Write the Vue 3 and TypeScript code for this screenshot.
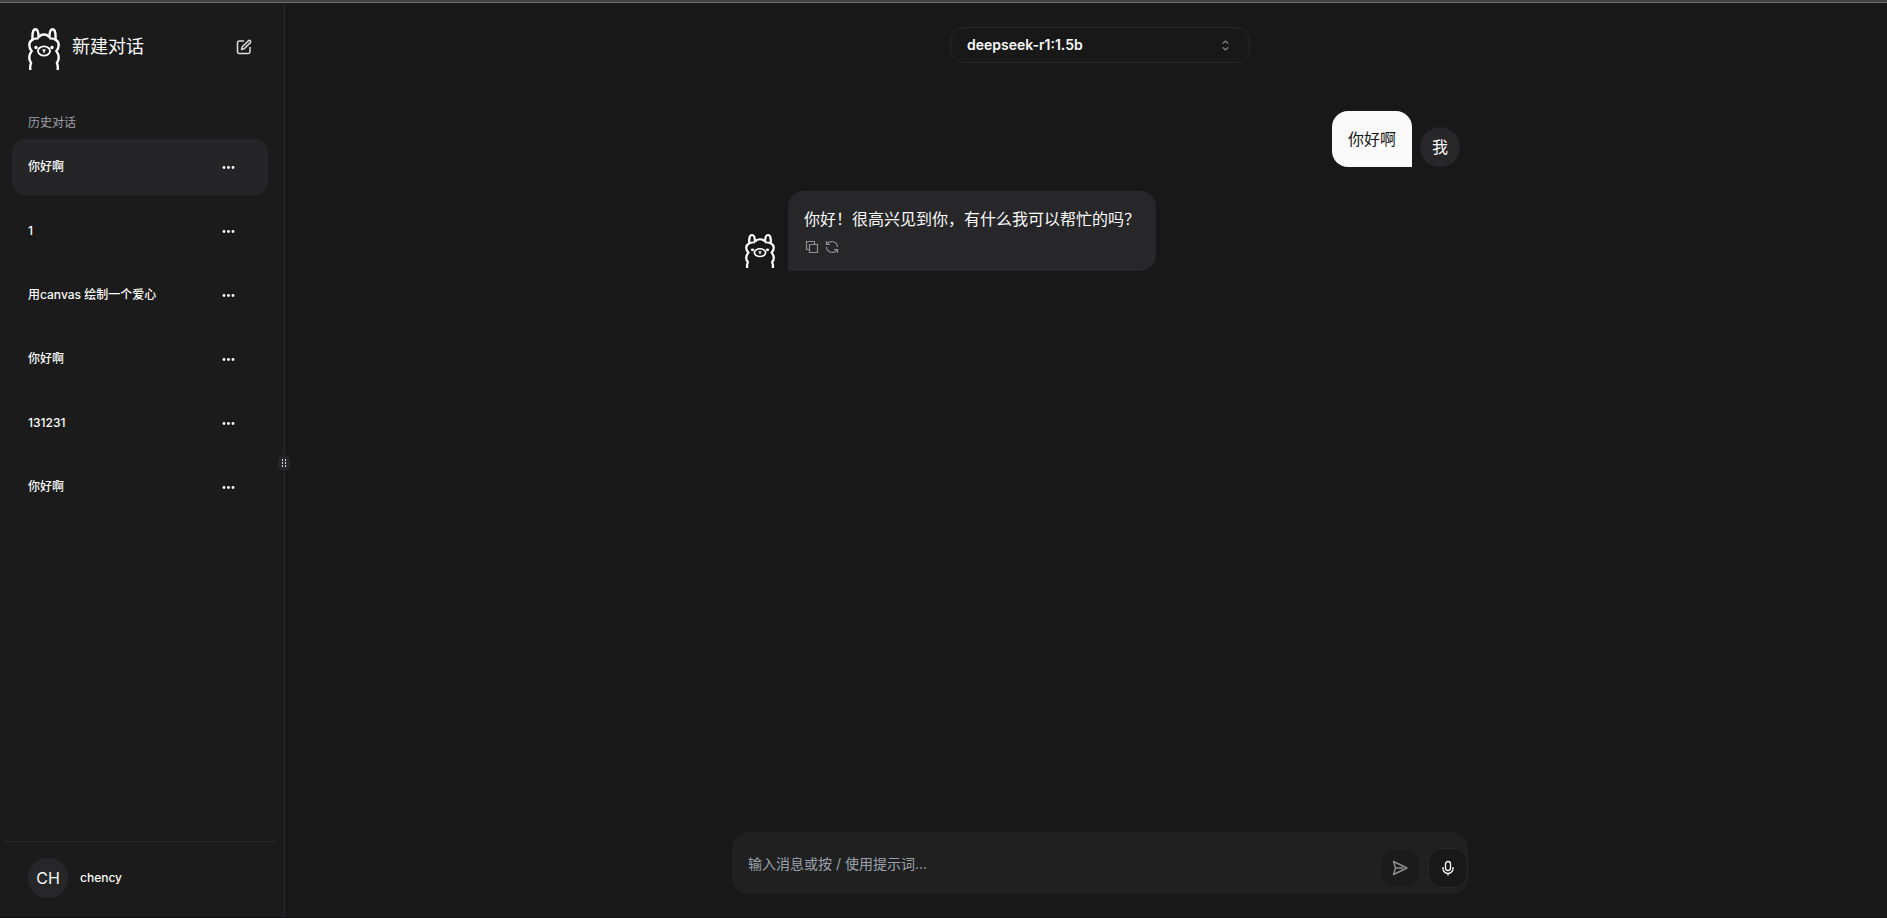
<script setup lang="ts">
import { ref } from 'vue'

interface Conversation {
  id: number
  title: string
}

const conversations: Conversation[] = [
  { id: 1, title: '你好啊' },
  { id: 2, title: '1' },
  { id: 3, title: '用canvas 绘制一个爱心' },
  { id: 4, title: '你好啊' },
  { id: 5, title: '131231' },
  { id: 6, title: '你好啊' },
]

const activeId = ref(1)
const draft = ref('')
const model = ref('deepseek-r1:1.5b')
</script>

<template>
  <div class="app">
    <svg class="defs" aria-hidden="true">
      <symbol id="llama" viewBox="0 0 32 42" preserveAspectRatio="none">
        <g fill="none" stroke="#fff" stroke-width="2.400" stroke-linecap="butt" stroke-linejoin="round">
          <path d="M4.800 12.500C4 8 4.400 1.300 7.400 1.300c2.500 0 3.200 4 3.200 8.300" />
          <path d="M27.200 12.500C28 8 27.600 1.300 24.600 1.300c-2.500 0-3.200 4-3.200 8.300" />
          <path d="M10.600 9.400C12 7.300 13.800 6.500 16 6.500s4 .8 5.400 2.900" />
          <path d="M10.800 10.400C5 10 1.300 12.700 1.300 17c0 2.300.8 4.200 2.400 6C2.100 25 1.300 27.200 1.300 29.700c0 2 .6 3.600 1.800 5C2.300 36.500 2 39 2.300 42" />
          <path d="M21.200 10.400C27 10 30.700 12.700 30.700 17c0 2.300-.8 4.200-2.400 6 1.600 2 2.400 4.200 2.400 6.700 0 2-.6 3.600-1.800 5 .8 1.800 1.100 4.300.8 7.300" />
          <ellipse cx="16" cy="23" rx="6" ry="4.700" stroke-width="1.800" />
          <path d="M14.600 21.500 16 22.700l1.400-1.200M16 22.500v2.200" stroke-width="1.500" />
        </g>
        <circle cx="8" cy="19.500" r="1.700" fill="#fff" />
        <circle cx="24" cy="19.500" r="1.700" fill="#fff" />
      </symbol>
    </svg>

    <div class="topline"></div>
    <div class="workspace">
      <aside class="sidebar">
        <button class="new-chat" type="button">
          <svg class="brand"><use href="#llama" /></svg>
          <span class="new-label">新建对话</span>
          <svg class="edit" viewBox="0 0 16 16" fill="none" stroke="#ddd" stroke-width="1.500" stroke-linejoin="round" aria-hidden="true">
            <path d="M8 2H3.200A1.700 1.700 0 0 0 1.500 3.700v9.100a1.700 1.700 0 0 0 1.700 1.700h9.100a1.700 1.700 0 0 0 1.700-1.700V8" />
            <path d="M5.500 10.500 6.300 7.800 12.400 1.700a1.300 1.300 0 0 1 1.900 1.900L8.200 9.700z" />
          </svg>
        </button>

        <h2 class="history-title">历史对话</h2>
        <ul class="history">
          <li
            v-for="item in conversations"
            :key="item.id"
            class="row"
            :class="{ active: item.id === activeId }"
          >
            <button class="row-title" type="button" @click="activeId = item.id">{{ item.title }}</button>
            <button class="more" type="button" aria-label="更多">
              <svg viewBox="0 0 16 16" fill="#fff" aria-hidden="true">
                <circle cx="4" cy="8.500" r="1.400" />
                <circle cx="8.500" cy="8.500" r="1.400" />
                <circle cx="13" cy="8.500" r="1.400" />
              </svg>
            </button>
          </li>
        </ul>

        <footer class="account">
          <span class="avatar">CH</span>
          <span class="account-name">chency</span>
        </footer>

        <div class="handle">
          <svg viewBox="0 0 6 10" fill="#ddd" aria-hidden="true">
            <rect x="1" y="1" width="1" height="2" /><rect x="4" y="1" width="1" height="2" />
            <rect x="1" y="4" width="1" height="2" /><rect x="4" y="4" width="1" height="2" />
            <rect x="1" y="7" width="1" height="2" /><rect x="4" y="7" width="1" height="2" />
          </svg>
        </div>
      </aside>

      <main class="chat">
        <button class="model" type="button" aria-haspopup="listbox">
          <span>{{ model }}</span>
          <svg viewBox="0 0 15 15" aria-hidden="true">
            <path d="M4.800 5.600 7.500 3l2.700 2.600M4.800 9.400 7.500 12l2.700-2.600" fill="none" stroke="#8b8b8b" stroke-width="1.200" />
          </svg>
        </button>

        <section class="messages">
          <div class="message mine">
            <p class="bubble">你好啊</p>
            <span class="avatar">我</span>
          </div>
          <div class="message">
            <span class="bot"><svg><use href="#llama" /></svg></span>
            <div class="bubble">
              <p>你好！很高兴见到你，有什么我可以帮忙的吗？</p>
              <div class="actions">
                <button type="button" aria-label="复制">
                  <svg viewBox="0 0 14 14" fill="none" stroke="#8f8f96" stroke-width="1.200" aria-hidden="true">
                    <path d="M4.500 4.500h8v8h-8zM4.500 9.500h-3v-8h8v3" />
                  </svg>
                </button>
                <button type="button" aria-label="重新生成">
                  <svg viewBox="0 0 14 14" fill="none" stroke="#8f8f96" stroke-width="1.200" aria-hidden="true">
                    <path d="M1.500 1v3.500H5M1.700 4.300C3 2.300 4.800 1.500 7 1.500c3 0 5.500 2.500 5.500 5.500M12.500 13V9.500H9M12.300 9.700C11 11.700 9.200 12.500 7 12.500 4 12.500 1.500 10 1.500 7" />
                  </svg>
                </button>
              </div>
            </div>
          </div>
        </section>

        <form class="composer" @submit.prevent>
          <input v-model="draft" type="text" aria-label="消息" placeholder="输入消息或按 / 使用提示词..." />
          <button class="square dim" type="submit" aria-label="发送">
            <svg viewBox="0 0 16 16" fill="none" stroke="#fff" stroke-width="1.400" stroke-linejoin="round" aria-hidden="true">
              <path d="M1.500 1.500 15 8 1.500 14.500 3.500 8zM3.500 8H11" />
            </svg>
          </button>
          <button class="square" type="button" aria-label="语音">
            <svg viewBox="0 0 16 16" fill="none" stroke="#fff" stroke-width="1.300" aria-hidden="true">
              <rect x="5.500" y="1.500" width="5" height="9" rx="2.500" />
              <path d="M3 7v1.500a5 5 0 0 0 10 0V7M8 13.500V15.500" />
            </svg>
          </button>
        </form>
      </main>
    </div>
  </div>
</template>

<style>
body {
  margin: 0;
  background: #181818;
}
</style>

<style scoped>
* {
  box-sizing: border-box;
}
.app {
  display: flex;
  flex-direction: column;
  min-height: 100vh;
  border-bottom: 1px solid #160e12;
  color: #fafafa;
  font-family: Inter, "Noto Sans CJK SC", sans-serif;
  font-size: 16px;
  line-height: 24px;
}
.defs {
  position: absolute;
  width: 0;
  height: 0;
}
button {
  padding: 0;
  border: 0;
  background: none;
  color: inherit;
  font: inherit;
  cursor: pointer;
}
svg {
  display: block;
}
p,
h2,
ul {
  margin: 0;
  padding: 0;
}
.topline {
  height: 3px;
  background: #424242;
  border-bottom: 1px solid #6c6c6c;
}
.workspace {
  flex: 1;
  display: flex;
}
.sidebar {
  position: relative;
  flex: none;
  display: flex;
  flex-direction: column;
  width: 285px;
  background: #1b1b1b;
  border-right: 1px solid #29292b;
}
.new-chat {
  display: flex;
  align-items: center;
  gap: 12px;
  margin: 24px 32px 0 28px;
  height: 40px;
  text-align: left;
}
.brand {
  width: 32px;
  height: 42px;
  margin-top: 4px;
}
.new-label {
  flex: 1;
  font-size: 18px;
  line-height: 28px;
}
.edit {
  width: 16px;
  height: 16px;
}
.history-title {
  margin: 47px 28px 8px;
  color: #a1a1aa;
  font-size: 12px;
  font-weight: 400;
  line-height: 17px;
}
.history {
  display: flex;
  flex-direction: column;
  gap: 8px;
  margin: 0 16px 0 12px;
  list-style: none;
}
.row {
  display: flex;
  align-items: center;
  height: 56px;
  padding: 0 32px 0 16px;
  border-radius: 14px;
  font-size: 12px;
  font-weight: 500;
  line-height: 16px;
}
.row.active {
  background: #252527;
}
.row-title {
  flex: 1;
  text-align: left;
}
.more svg {
  width: 16px;
  height: 16px;
}
.account {
  display: flex;
  align-items: center;
  gap: 12px;
  margin: auto 8px 0 4px;
  padding: 16px 24px 19px;
  border-top: 1px solid #29292b;
}
.account-name {
  font-size: 12px;
  font-weight: 500;
  line-height: 16px;
}
.avatar {
  flex: none;
  display: grid;
  place-items: center;
  width: 40px;
  height: 40px;
  border-radius: 50%;
  background: #27272a;
}
.handle {
  position: absolute;
  top: 452px;
  right: -6px;
  display: grid;
  place-items: center;
  width: 12px;
  height: 16px;
  border-radius: 6px;
  background: #27272a;
}
.handle svg {
  width: 6px;
  height: 10px;
}
.chat {
  flex: 1;
  display: flex;
  flex-direction: column;
  align-items: center;
  padding: 24px 0 23px 28px;
  background: #181818;
}
.model {
  display: flex;
  align-items: center;
  justify-content: space-between;
  width: 300px;
  height: 36px;
  padding: 0 16px;
  border: 1px solid #27272a;
  border-radius: 14px;
  font-size: 14px;
  font-weight: 600;
  line-height: 20px;
}
.model svg {
  width: 15px;
  height: 15px;
}
.messages {
  display: flex;
  flex: 1;
  flex-direction: column;
  gap: 24px;
  width: 100%;
  max-width: 720px;
  padding-top: 48px;
}
.message {
  display: flex;
  align-items: flex-end;
  gap: 8px;
}
.mine {
  justify-content: flex-end;
}
.bubble {
  padding: 16px;
  border-radius: 16px 16px 16px 0;
  background: #27272a;
}
.mine .bubble {
  border-radius: 16px 16px 0 16px;
  background: #fafafa;
  color: #18181b;
}
.bot {
  display: grid;
  place-items: center;
  width: 40px;
  height: 40px;
}
.bot svg {
  width: 30px;
  height: 34px;
}
.actions {
  display: flex;
  gap: 6px;
  padding: 9px 0 1px 1px;
}
.actions svg {
  width: 14px;
  height: 14px;
}
.composer {
  display: flex;
  align-items: flex-end;
  gap: 8px;
  width: 100%;
  max-width: 736px;
  height: 62px;
  padding-bottom: 6px;
  border-radius: 16px;
  background: #202020;
}
.composer input {
  flex: 1;
  min-width: 0;
  height: 50px;
  padding: 0 16px;
  border: 0;
  outline: 0;
  background: none;
  color: #fafafa;
  font: inherit;
  font-size: 14px;
}
.composer input::placeholder {
  color: #9ca3af;
  opacity: 1;
}
.square {
  display: grid;
  place-items: center;
  width: 40px;
  height: 40px;
  border: 1px solid #27272a;
  border-radius: 14px;
  background: #181818;
}
.square svg {
  width: 16px;
  height: 16px;
}
.dim {
  opacity: 0.5;
}
</style>
